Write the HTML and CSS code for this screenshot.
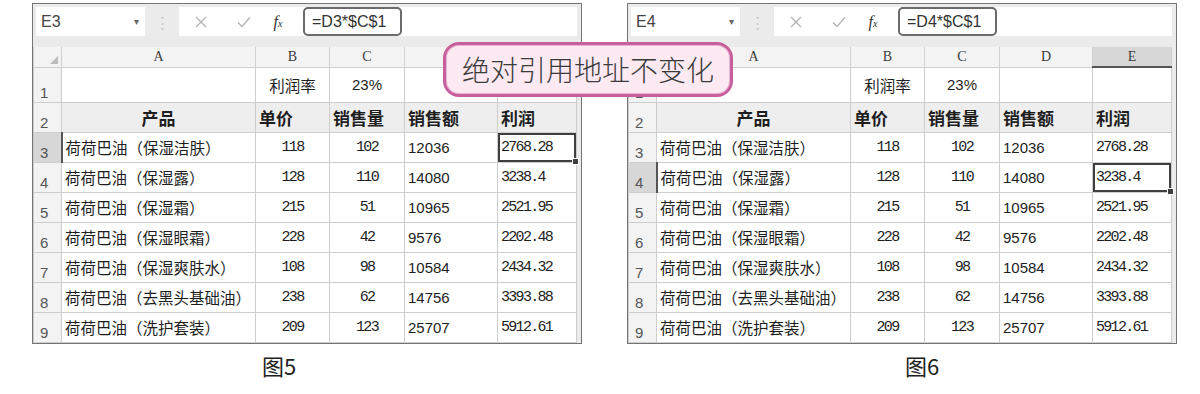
FILE: index.html
```html
<!DOCTYPE html>
<html lang="zh-CN">

<head>
    <meta charset="UTF-8">
    <title>绝对引用地址不变化</title>
    <link rel="stylesheet" href="styles.css">
</head>

<body>
    <div class="page">
        <figure class="fig fig-5">
            <div class="sheet">
                <div class="fbar">
                    <div class="namebox"><span>E3</span><span class="drop">&#9662;</span></div>
                    <span class="grip">&#8942;</span>
                    <div class="fx-area">
                        <span class="ico">
                            <svg width="12" height="12" viewBox="0 0 12 12"><path d="M1 1 L11 11 M11 1 L1 11" stroke="#b5b5b5" stroke-width="1.4" fill="none"/></svg>
                        </span>
                        <span class="ico">
                            <svg width="14" height="12" viewBox="0 0 14 12"><path d="M1 6.5 L5 10.5 L13 1.5" stroke="#b5b5b5" stroke-width="1.4" fill="none"/></svg>
                        </span>
                        <span class="fx">f<small>x</small></span>
                        <span class="formula">=D3*$C$1</span>
                    </div>
                </div>
                <table class="grid">
                    <colgroup>
                        <col class="c-row"><col class="c-a"><col class="c-b"><col class="c-c"><col class="c-d"><col class="c-e">
                    </colgroup>
                    <tr class="hdr">
                        <th class="corner"><svg width="8" height="8" viewBox="0 0 8 8"><polygon points="8,0 8,8 0,8" fill="#bcbcbc"/></svg></th>
                        <th>A</th><th>B</th><th>C</th><th>D</th><th class="on">E</th>
                    </tr>
                    <tr class="r1">
                        <th class="rn">1</th><td></td><td class="mid">利润率</td><td class="mid sans">23%</td><td></td><td></td>
                    </tr>
                    <tr class="r2">
                        <th class="rn">2</th><td class="mid">产品</td><td>单价</td><td>销售量</td><td>销售额</td><td>利润</td>
                    </tr>
                    <tr>
                        <th class="rn on">3</th><td>荷荷巴油（保湿洁肤）</td><td class="num">118</td><td class="num">102</td><td class="sans">12036</td><td class="mono sel">2768.28</td>
                    </tr>
                    <tr>
                        <th class="rn">4</th><td>荷荷巴油（保湿露）</td><td class="num">128</td><td class="num">110</td><td class="sans">14080</td><td class="mono">3238.4</td>
                    </tr>
                    <tr>
                        <th class="rn">5</th><td>荷荷巴油（保湿霜）</td><td class="num">215</td><td class="num">51</td><td class="sans">10965</td><td class="mono">2521.95</td>
                    </tr>
                    <tr>
                        <th class="rn">6</th><td>荷荷巴油（保湿眼霜）</td><td class="num">228</td><td class="num">42</td><td class="sans">9576</td><td class="mono">2202.48</td>
                    </tr>
                    <tr>
                        <th class="rn">7</th><td>荷荷巴油（保湿爽肤水）</td><td class="num">108</td><td class="num">98</td><td class="sans">10584</td><td class="mono">2434.32</td>
                    </tr>
                    <tr>
                        <th class="rn">8</th><td>荷荷巴油（去黑头基础油）</td><td class="num">238</td><td class="num">62</td><td class="sans">14756</td><td class="mono">3393.88</td>
                    </tr>
                    <tr>
                        <th class="rn">9</th><td>荷荷巴油（洗护套装）</td><td class="num">209</td><td class="num">123</td><td class="sans">25707</td><td class="mono">5912.61</td>
                    </tr>
                </table>
            </div>
            <figcaption>图5</figcaption>
        </figure>

        <figure class="fig fig-6">
            <div class="sheet">
                <div class="fbar">
                    <div class="namebox"><span>E4</span><span class="drop">&#9662;</span></div>
                    <span class="grip">&#8942;</span>
                    <div class="fx-area">
                        <span class="ico">
                            <svg width="12" height="12" viewBox="0 0 12 12"><path d="M1 1 L11 11 M11 1 L1 11" stroke="#b5b5b5" stroke-width="1.4" fill="none"/></svg>
                        </span>
                        <span class="ico">
                            <svg width="14" height="12" viewBox="0 0 14 12"><path d="M1 6.5 L5 10.5 L13 1.5" stroke="#b5b5b5" stroke-width="1.4" fill="none"/></svg>
                        </span>
                        <span class="fx">f<small>x</small></span>
                        <span class="formula">=D4*$C$1</span>
                    </div>
                </div>
                <table class="grid">
                    <colgroup>
                        <col class="c-row"><col class="c-a"><col class="c-b"><col class="c-c"><col class="c-d"><col class="c-e">
                    </colgroup>
                    <tr class="hdr">
                        <th class="corner"><svg width="8" height="8" viewBox="0 0 8 8"><polygon points="8,0 8,8 0,8" fill="#bcbcbc"/></svg></th>
                        <th>A</th><th>B</th><th>C</th><th>D</th><th class="on">E</th>
                    </tr>
                    <tr class="r1">
                        <th class="rn">1</th><td></td><td class="mid">利润率</td><td class="mid sans">23%</td><td></td><td></td>
                    </tr>
                    <tr class="r2">
                        <th class="rn">2</th><td class="mid">产品</td><td>单价</td><td>销售量</td><td>销售额</td><td>利润</td>
                    </tr>
                    <tr>
                        <th class="rn">3</th><td>荷荷巴油（保湿洁肤）</td><td class="num">118</td><td class="num">102</td><td class="sans">12036</td><td class="mono">2768.28</td>
                    </tr>
                    <tr>
                        <th class="rn on">4</th><td>荷荷巴油（保湿露）</td><td class="num">128</td><td class="num">110</td><td class="sans">14080</td><td class="mono sel">3238.4</td>
                    </tr>
                    <tr>
                        <th class="rn">5</th><td>荷荷巴油（保湿霜）</td><td class="num">215</td><td class="num">51</td><td class="sans">10965</td><td class="mono">2521.95</td>
                    </tr>
                    <tr>
                        <th class="rn">6</th><td>荷荷巴油（保湿眼霜）</td><td class="num">228</td><td class="num">42</td><td class="sans">9576</td><td class="mono">2202.48</td>
                    </tr>
                    <tr>
                        <th class="rn">7</th><td>荷荷巴油（保湿爽肤水）</td><td class="num">108</td><td class="num">98</td><td class="sans">10584</td><td class="mono">2434.32</td>
                    </tr>
                    <tr>
                        <th class="rn">8</th><td>荷荷巴油（去黑头基础油）</td><td class="num">238</td><td class="num">62</td><td class="sans">14756</td><td class="mono">3393.88</td>
                    </tr>
                    <tr>
                        <th class="rn">9</th><td>荷荷巴油（洗护套装）</td><td class="num">209</td><td class="num">123</td><td class="sans">25707</td><td class="mono">5912.61</td>
                    </tr>
                </table>
            </div>
            <figcaption>图6</figcaption>
        </figure>

        <div class="callout">绝对引用地址不变化</div>
    </div>
</body>

</html>
```

FILE: styles.css
```css
body {
    margin: 0;
    background-color: #fff;
    font-family: "Noto Sans CJK SC", sans-serif;
    color: #1e1e1e;
}

.page {
    position: relative;
    display: flex;
    gap: 45px;
    width: 1200px;
    height: 394px;
    padding: 3px 0 0 32px;
    box-sizing: border-box;
}

.fig {
    margin: 0;
    width: 550px;
}

.sheet {
    border: 1px solid #747474;
    background-color: #ebebeb;
}

/* formula bar */
.fbar {
    display: flex;
    align-items: center;
    height: 29px;
    padding: 3px 4px 11px 3px;
}

.namebox {
    display: flex;
    align-items: center;
    justify-content: space-between;
    width: 109px;
    height: 29px;
    padding: 0 6px 0 5px;
    box-sizing: border-box;
    background-color: #fff;
    font-family: "Liberation Sans", sans-serif;
    font-size: 16px;
    color: #444;
}

.drop {
    font-size: 10px;
    color: #666;
}

.grip {
    width: 34px;
    text-align: center;
    color: #c4c4c4;
    font-size: 15px;
}

.fx-area {
    flex: 1;
    display: flex;
    align-items: center;
    height: 29px;
    background-color: #fff;
}

.ico {
    display: flex;
    justify-content: center;
    width: 43px;
}

.fx {
    width: 26px;
    text-align: center;
    font-family: "Liberation Serif", serif;
    font-style: italic;
    font-size: 16px;
    color: #333;
}

.fx small {
    font-size: 10px;
}

.formula {
    margin-left: 12px;
    width: 99px;
    height: 29px;
    line-height: 25px;
    padding-left: 7px;
    box-sizing: border-box;
    border: 2px solid #6b6b6b;
    border-radius: 5px;
    font-family: "Liberation Sans", sans-serif;
    font-size: 16px;
    color: #333;
}

/* grid */
.grid {
    border-collapse: collapse;
    table-layout: fixed;
    width: 543px;
    background-color: #fff;
}

.c-row { width: 28px; }
.c-a { width: 194px; }
.c-b { width: 74px; }
.c-c { width: 75px; }
.c-d { width: 93px; }
.c-e { width: 79px; }

.grid th,
.grid td {
    padding: 0;
    border: 1px solid #cdcdcd;
    white-space: nowrap;
    overflow: visible;
}

.grid td {
    padding-left: 3px;
    font-size: 15.5px;
    text-align: left;
}

.grid tr {
    height: 30px;
}

.grid tr.hdr {
    height: 20px;
}

.grid tr.r1 {
    height: 35px;
}

.hdr th {
    background-color: #f3f3f3;
    border-color: #cfcfcf;
    border-top: none;
    font-family: "Liberation Serif", serif;
    font-weight: normal;
    font-size: 14px;
    color: #3c3c3c;
}

.hdr th.on {
    background-color: #d7d7d7;
    border-bottom: 2px solid #555;
}

.corner {
    text-align: right;
    vertical-align: bottom;
}

.corner svg {
    display: block;
    margin: 0 3px 3px auto;
}

.rn {
    background-color: #f3f3f3;
    border-left: none;
    text-align: left;
    vertical-align: bottom;
    padding: 0 0 1px 6px !important;
    font-family: "Liberation Sans", sans-serif;
    font-weight: normal;
    font-size: 15px;
    color: #555;
}

.rn.on {
    background-color: #d7d7d7;
    border-right: 2px solid #555;
}

.r2 td {
    background-color: #eeeeee;
    font-weight: bold;
    font-size: 17px;
}

.grid td.mid,
.grid td.num {
    text-align: center;
    padding-left: 0;
}

.sans {
    font-family: "Liberation Sans", sans-serif;
    font-size: 15px !important;
}

.num,
.mono {
    font-family: "Liberation Mono", monospace;
    font-size: 15px !important;
    letter-spacing: -1.7px;
}

.sel {
    position: relative;
    box-shadow: inset 0 0 0 2px #3f3f3f;
}

.sel::after {
    content: "";
    position: absolute;
    right: -3px;
    bottom: -3px;
    width: 5px;
    height: 5px;
    background-color: #3f3f3f;
    border: 1px solid #fff;
}

figcaption {
    margin-top: 8px;
    font-size: 22px;
    line-height: 26px;
    color: #222;
}

.fig-5 figcaption {
    padding-left: 230px;
}

.fig-6 figcaption {
    padding-left: 278px;
}

/* annotation bubble */
.callout {
    position: absolute;
    left: 443px;
    top: 42px;
    width: 290px;
    height: 55px;
    box-sizing: border-box;
    border: 3px solid #c65f9c;
    border-radius: 16px;
    box-shadow: inset 0 0 0 1px #eeb3d3;
    background-color: #fce9f2;
    text-align: center;
    line-height: 48px;
    font-size: 28px;
    font-weight: 300;
    color: #3a3a3a;
}
```
